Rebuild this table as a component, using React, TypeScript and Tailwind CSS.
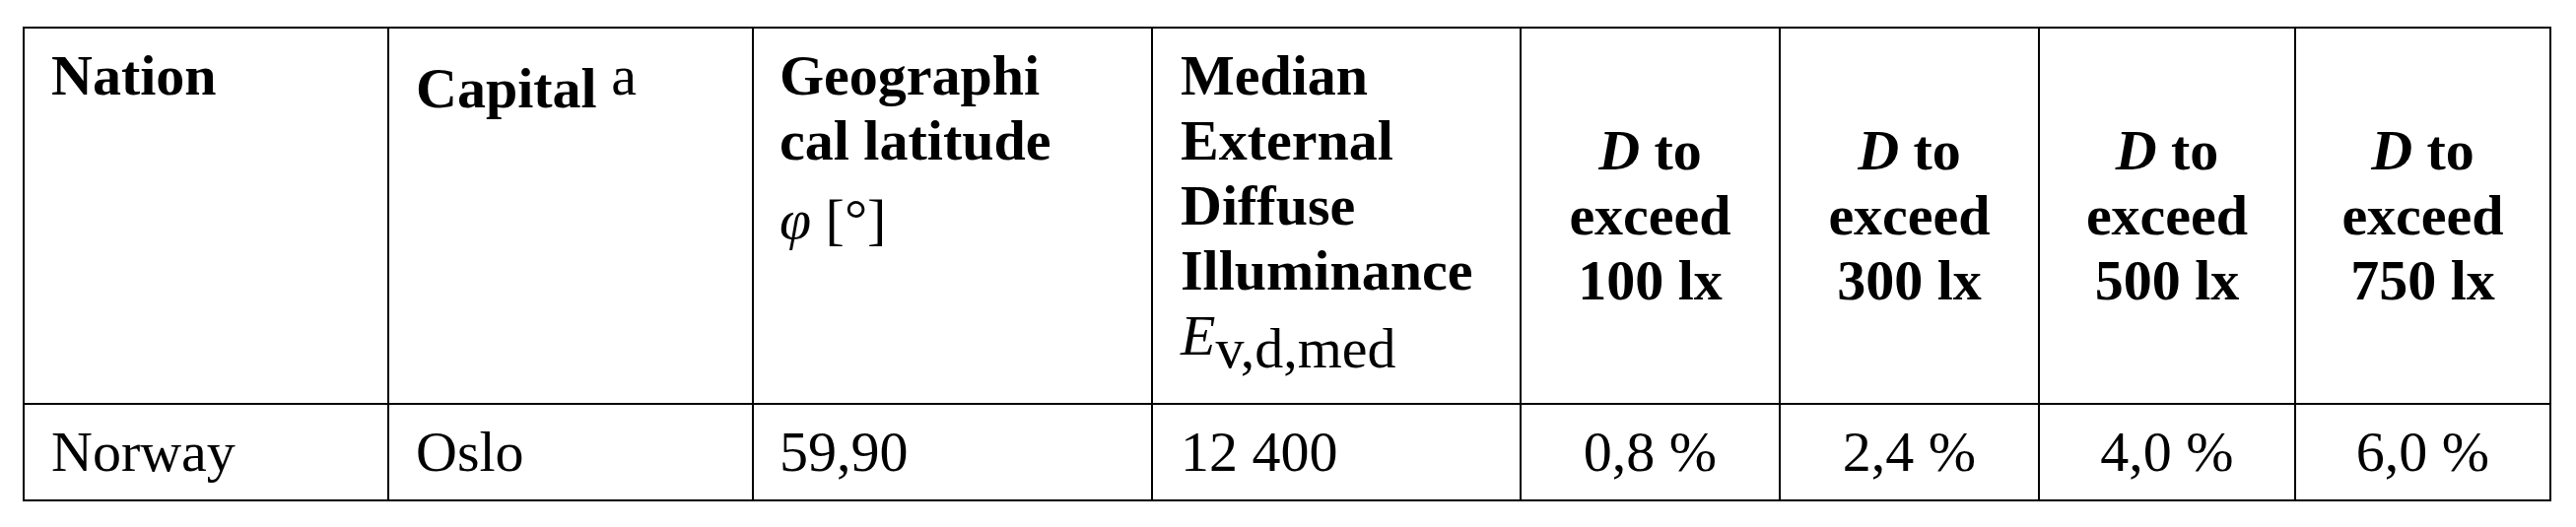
import React from "react";

type Row = {
  nation: string;
  capital: string;
  latitude: string;
  illuminance: string;
  d100: string;
  d300: string;
  d500: string;
  d750: string;
};

const rows: Row[] = [
  {
    nation: "Norway",
    capital: "Oslo",
    latitude: "59,90",
    illuminance: "12 400",
    d100: "0,8 %",
    d300: "2,4 %",
    d500: "4,0 %",
    d750: "6,0 %",
  },
];

const thresholds = ["100", "300", "500", "750"];

const cell = "border-r-2 border-b-2 border-black";

function DHeader({ lux }: { lux: string }) {
  return (
    <div className={`${cell} flex flex-col items-center justify-center text-center font-bold`}>
      <div>
        <span className="italic">D</span> to
      </div>
      <div>exceed</div>
      <div>{lux} lx</div>
    </div>
  );
}

export default function App() {
  return (
    <div className="min-h-[535px] w-[2614px] bg-white pl-[23px] pt-[27px] font-['Liberation_Serif',serif] text-[58px] leading-[66px] text-black">
      <div className="grid w-[2566px] grid-cols-[370px_370px_405px_374px_263px_263px_260px_259px] grid-rows-[382px_98px] border-t-2 border-l-2 border-black">
        {/* header */}
        <div className={`${cell} pl-[27px] pt-[15px] font-bold`}>Nation</div>
        <div className={`${cell} pl-[27px] pt-[15px] font-bold`}>
          Capital <span className="align-[13px] font-normal">a</span>
        </div>
        <div className={`${cell} pl-[26px] pt-[15px]`}>
          <div className="font-bold">Geographi</div>
          <div className="font-bold">cal latitude</div>
          <div className="mt-[14px]">
            <span className="italic">φ</span> [°]
          </div>
        </div>
        <div className={`${cell} pl-[28px] pt-[15px]`}>
          <div className="font-bold">Median</div>
          <div className="font-bold">External</div>
          <div className="font-bold">Diffuse</div>
          <div className="font-bold">Illuminance</div>
          <div>
            <span className="italic">E</span>
            <span className="align-[-13px]">v,d,med</span>
          </div>
        </div>
        {thresholds.map((t) => (
          <DHeader key={t} lux={t} />
        ))}

        {/* body */}
        {rows.map((r) => (
          <React.Fragment key={r.nation}>
            <div className={`${cell} pl-[27px] pt-[15px]`}>{r.nation}</div>
            <div className={`${cell} pl-[27px] pt-[15px]`}>{r.capital}</div>
            <div className={`${cell} pl-[26px] pt-[15px]`}>{r.latitude}</div>
            <div className={`${cell} pl-[28px] pt-[15px]`}>{r.illuminance}</div>
            <div className={`${cell} pt-[15px] text-center`}>{r.d100}</div>
            <div className={`${cell} pt-[15px] text-center`}>{r.d300}</div>
            <div className={`${cell} pt-[15px] text-center`}>{r.d500}</div>
            <div className={`${cell} pt-[15px] text-center`}>{r.d750}</div>
          </React.Fragment>
        ))}
      </div>
    </div>
  );
}
